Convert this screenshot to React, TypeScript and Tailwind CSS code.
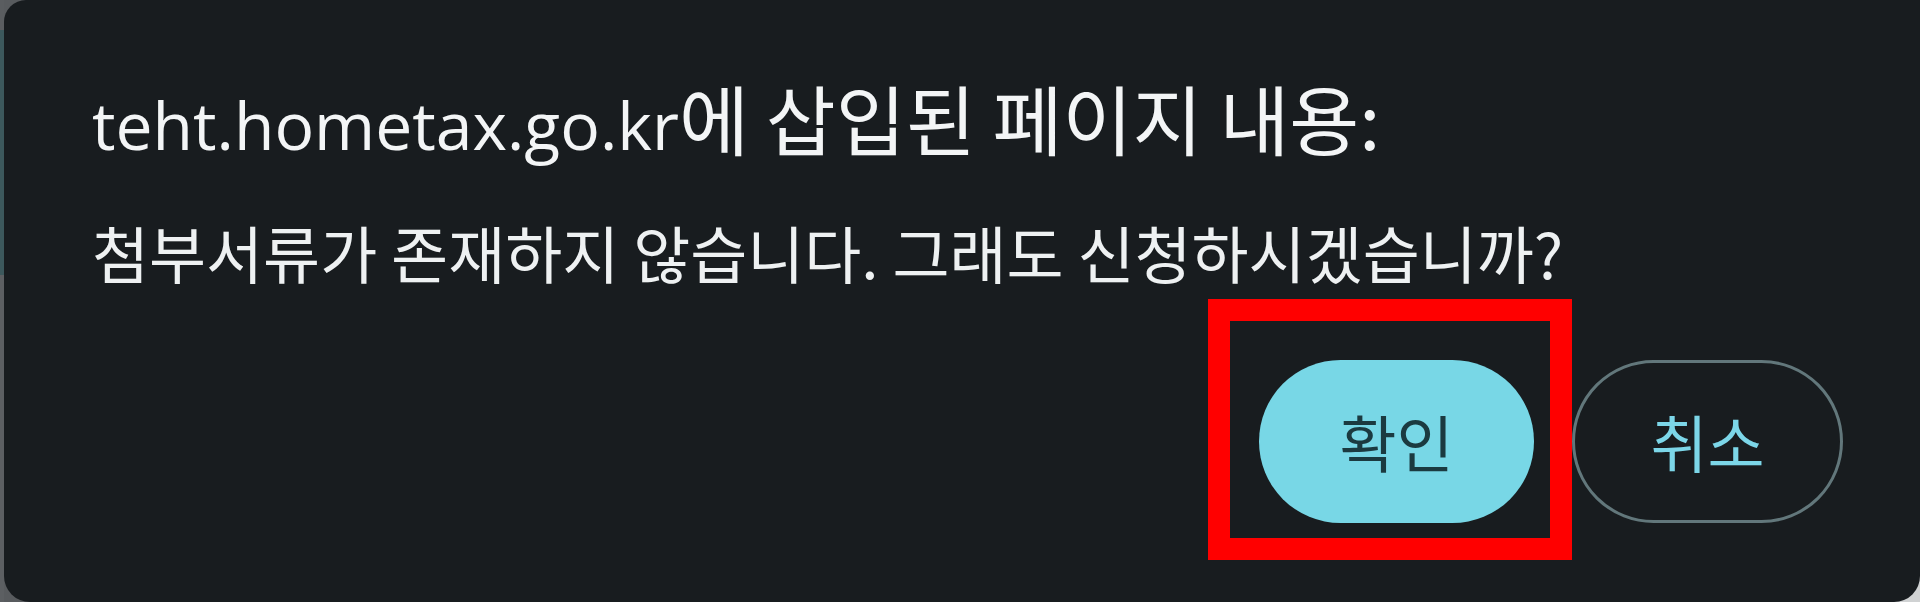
import React from "react";

export default function App() {
  return (
    <div className="w-[1920px] h-[602px] flex bg-[#585b5e] overflow-hidden relative">
      <div className="w-[4px] h-full flex flex-col">
        <div className="h-[30px] bg-[#5a5d60]" />
        <div className="h-[245px] bg-[#3c585c]" />
        <div className="flex-1 bg-[#5c5f62]" />
      </div>
      <div className="absolute right-0 bottom-0 w-[30px] h-[30px] bg-[#d0d2d3]" />
      <div
        className="relative flex-1 h-full bg-[#181c1f] rounded-tl-[22px] rounded-bl-[26px] rounded-br-[26px] flex flex-col pl-[88px] pr-[77px] pt-[77px] text-white"
        style={{ fontFamily: '"Noto Sans CJK KR", sans-serif' }}
      >
        <div className="leading-[80px] h-[80px] whitespace-nowrap text-[#f3f5f6]">
          <span
            className="text-[66px]"
            style={{ fontFamily: '"Open Sans", "Noto Sans CJK KR", sans-serif' }}
          >
            teht.hometax.go.kr
          </span>
          <span className="text-[76px]">에 삽입된 페이지 내용:</span>
        </div>
        <div className="mt-[60px] text-[62px] leading-[70px] h-[70px] whitespace-nowrap text-[#eef1f2]">
          첨부서류가 존재하지 않습니다. 그래도 신청하시겠습니까?
        </div>
        <div className="mt-[73px] flex justify-end gap-[38px]">
          <div className="relative">
            <button className="w-[275px] h-[163px] rounded-full bg-[#78d7e6] text-[#1b3a40] text-[62px] flex items-center justify-center">
              확인
            </button>
            <div className="absolute left-[-51px] top-[-61px] right-[-38px] bottom-[-37px] border-[22px] border-[#ff0000] pointer-events-none" />
          </div>
          <button className="w-[271px] h-[163px] rounded-full border-[3px] border-[#62777b] bg-transparent text-[#7cd6e8] text-[62px] flex items-center justify-center">
            취소
          </button>
        </div>
      </div>
    </div>
  );
}
